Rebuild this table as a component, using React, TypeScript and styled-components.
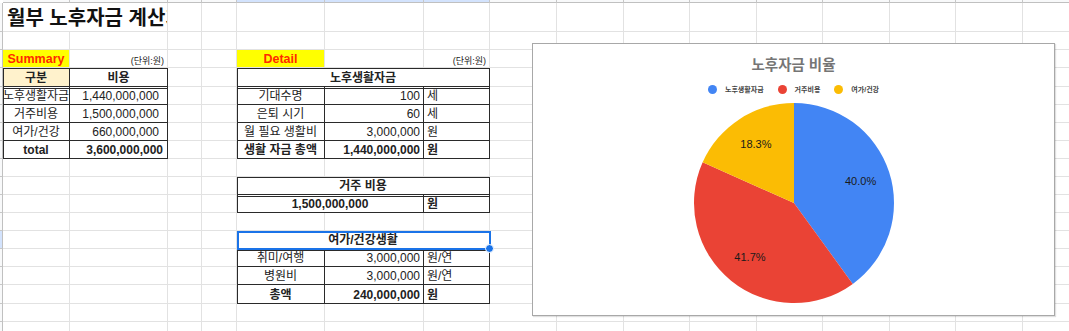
import React from "react";
import styled, { createGlobalStyle } from "styled-components";

const GRID = "#e2e2e2";
const DARK = "#2a2a2a";
const YELLOW = "#ffff00";
const RED = "#ff2a00";
const SELECT = "#1a73e8";

// px widths: row header, then A..P
const COLS = [3, 67, 98, 34, 35, 88, 99, 66, 67, 67, 66, 67, 66, 67, 66, 67, 67];
// px heights: column header, then rows 1..18
const ROWS = [3, 29, 18, 18, 19, 18, 18, 18, 18, 18, 18, 18, 18, 18, 18, 18, 19, 18, 18];

const GlobalStyle = createGlobalStyle`
  html, body {
    margin: 0;
    padding: 0;
    background: #fff;
    overflow: hidden;
  }
  body {
    font-family: "Liberation Sans", "Noto Sans CJK KR", sans-serif;
  }
`;

type Align = "left" | "center" | "right";

type CellSpec = {
  r: number;
  c: number;
  span?: number;
  text: string;
  align?: Align;
  bold?: boolean;
  bg?: string;
  color?: string;
  size?: number;
  t?: boolean;
  gap?: boolean;
  l?: boolean;
  rb?: boolean;
  bb?: boolean;
  pl?: number;
  pr?: number;
  bottom?: boolean;
};

const box = { rb: true, bb: true };

const cells: CellSpec[] = [
  { r: 1, c: 1, span: 2, text: "월부 노후자금 계산기", align: "left", bold: true, size: 20, pl: 4, pr: 0, color: "#111" },

  // summary
  { r: 3, c: 1, text: "Summary", bg: YELLOW, color: RED, bold: true, size: 12.5 },
  { r: 3, c: 2, text: "(단위:원)", align: "right", size: 9, bottom: true },
  { r: 4, c: 1, text: "구분", bg: "#fff2cc", bold: true, t: true, l: true, ...box },
  { r: 4, c: 2, text: "비용", bold: true, t: true, ...box },
  { r: 5, c: 1, text: "노후생활자금", l: true, gap: true, ...box },
  { r: 5, c: 2, text: "1,440,000,000", align: "right", pr: 8, gap: true, ...box },
  { r: 6, c: 1, text: "거주비용", l: true, ...box },
  { r: 6, c: 2, text: "1,500,000,000", align: "right", pr: 8, ...box },
  { r: 7, c: 1, text: "여가/건강", l: true, ...box },
  { r: 7, c: 2, text: "660,000,000", align: "right", pr: 8, ...box },
  { r: 8, c: 1, text: "total", bold: true, l: true, ...box },
  { r: 8, c: 2, text: "3,600,000,000", align: "right", bold: true, pr: 4, ...box },

  // detail
  { r: 3, c: 5, text: "Detail", bg: YELLOW, color: RED, bold: true, size: 12.5 },
  { r: 3, c: 7, text: "(단위:원)", align: "right", size: 9, bottom: true },
  { r: 4, c: 5, span: 3, text: "노후생활자금", bold: true, t: true, l: true, ...box },
  { r: 5, c: 5, text: "기대수명", l: true, gap: true, ...box },
  { r: 5, c: 6, text: "100", align: "right", gap: true, ...box },
  { r: 5, c: 7, text: "세", align: "left", gap: true, ...box },
  { r: 6, c: 5, text: "은퇴 시기", l: true, ...box },
  { r: 6, c: 6, text: "60", align: "right", ...box },
  { r: 6, c: 7, text: "세", align: "left", ...box },
  { r: 7, c: 5, text: "월 필요 생활비", l: true, ...box },
  { r: 7, c: 6, text: "3,000,000", align: "right", ...box },
  { r: 7, c: 7, text: "원", align: "left", ...box },
  { r: 8, c: 5, text: "생활 자금 총액", bold: true, l: true, ...box },
  { r: 8, c: 6, text: "1,440,000,000", align: "right", bold: true, ...box },
  { r: 8, c: 7, text: "원", align: "left", bold: true, ...box },

  { r: 10, c: 5, span: 3, text: "거주 비용", bold: true, t: true, l: true, ...box },
  { r: 11, c: 5, span: 2, text: "1,500,000,000", bold: true, l: true, gap: true, ...box },
  { r: 11, c: 7, text: "원", align: "left", bold: true, gap: true, ...box },

  { r: 13, c: 5, span: 3, text: "여가/건강생활", bold: true, t: true, l: true, ...box },
  { r: 14, c: 5, text: "취미/여행", l: true, gap: true, ...box },
  { r: 14, c: 6, text: "3,000,000", align: "right", gap: true, ...box },
  { r: 14, c: 7, text: "원/연", align: "left", gap: true, ...box },
  { r: 15, c: 5, text: "병원비", l: true, ...box },
  { r: 15, c: 6, text: "3,000,000", align: "right", ...box },
  { r: 15, c: 7, text: "원/연", align: "left", ...box },
  { r: 16, c: 5, text: "총액", bold: true, l: true, ...box },
  { r: 16, c: 6, text: "240,000,000", align: "right", bold: true, ...box },
  { r: 16, c: 7, text: "원", align: "left", bold: true, ...box },
];

const slices = [
  { label: "노후생활자금", value: 1440000000, color: "#4285f4" },
  { label: "거주비용", value: 1500000000, color: "#ea4335" },
  { label: "여가/건강", value: 660000000, color: "#fbbc04" },
];

export default function App() {
  const rowNums = Array.from({ length: ROWS.length - 1 }, (_, i) => i + 1);
  const colNums = Array.from({ length: COLS.length - 1 }, (_, i) => i + 1);

  return (
    <Page>
      <GlobalStyle />
      <Sheet>
        {colNums.map((c) => (
          <ColHead key={`h${c}`} $col={c + 1} $active={c >= 5 && c <= 7} />
        ))}
        {rowNums.map((r) => (
          <RowHead key={`v${r}`} $row={r + 1} $active={r === 13} />
        ))}
        {rowNums.map((r) =>
          colNums.map((c) => <GridCell key={`g${r}-${c}`} $row={r + 1} $col={c + 1} />)
        )}
        {cells.map((s, i) => (
          <DataCell
            key={i}
            $row={s.r + 1}
            $col={s.c + 1}
            $span={s.span ?? 1}
            $align={s.align ?? "center"}
            $bold={!!s.bold}
            $bg={s.bg}
            $color={s.color}
            $size={s.size ?? 12}
            $t={!!s.t}
            $gap={!!s.gap}
            $l={!!s.l}
            $r={!!s.rb}
            $b={!!s.bb}
            $pl={s.pl ?? 3}
            $pr={s.pr ?? 3}
            $bottom={!!s.bottom}
          >
            {s.text}
          </DataCell>
        ))}
        <Selection $row={14} $col={6} $span={3}>
          <Handle />
        </Selection>
      </Sheet>

      <ChartBox>
        <ChartTitle>노후자금 비율</ChartTitle>
        <Legend>
          {slices.map((s) => (
            <LegendItem key={s.label}>
              <Dot $color={s.color} />
              {s.label}
            </LegendItem>
          ))}
        </Legend>
        <PieChart />
      </ChartBox>
    </Page>
  );
}

function PieChart() {
  const size = 204;
  const cx = size / 2;
  const cy = size / 2;
  const rad = 100;
  const total = slices.reduce((a, s) => a + s.value, 0);
  const pt = (frac: number, k = 1) => {
    const a = frac * Math.PI * 2;
    return [cx + rad * k * Math.sin(a), cy - rad * k * Math.cos(a)];
  };

  let acc = 0;
  const parts = slices.map((s) => {
    const start = acc / total;
    acc += s.value;
    const end = acc / total;
    const [x1, y1] = pt(start);
    const [x2, y2] = pt(end);
    const large = end - start > 0.5 ? 1 : 0;
    const [lx, ly] = pt((start + end) / 2, 0.7);
    return {
      ...s,
      d: `M${cx} ${cy} L${x1} ${y1} A${rad} ${rad} 0 ${large} 1 ${x2} ${y2} Z`,
      lx,
      ly,
      pct: (((end - start) * 100).toFixed(1)) + "%",
    };
  });

  return (
    <PieSvg width={size} height={size} viewBox={`0 0 ${size} ${size}`}>
      {parts.map((p) => (
        <path key={p.label} d={p.d} fill={p.color} />
      ))}
      {parts.map((p) => (
        <text
          key={p.label + "t"}
          x={p.lx}
          y={p.ly}
          textAnchor="middle"
          dominantBaseline="central"
        >
          {p.pct}
        </text>
      ))}
    </PieSvg>
  );
}

const Page = styled.div`
  position: relative;
  width: 1069px;
  height: 331px;
  overflow: hidden;
`;

const Sheet = styled.div`
  display: grid;
  grid-template-columns: ${COLS.map((w) => w + "px").join(" ")};
  grid-template-rows: ${ROWS.map((h) => h + "px").join(" ")};
`;

const ColHead = styled.div<{ $col: number; $active: boolean }>`
  grid-row: 1;
  grid-column: ${(p) => p.$col};
  box-sizing: border-box;
  background: ${(p) => (p.$active ? "#d3e3fd" : "#f8f9fa")};
  border-right: 1px solid #c7c7c7;
  border-bottom: 1px solid #c0c0c0;
`;

const RowHead = styled.div<{ $row: number; $active: boolean }>`
  grid-row: ${(p) => p.$row};
  grid-column: 1;
  box-sizing: border-box;
  background: ${(p) => (p.$active ? "#d3e3fd" : "#f8f9fa")};
  border-right: 1px solid #c0c0c0;
  border-bottom: 1px solid #c7c7c7;
`;

const GridCell = styled.div<{ $row: number; $col: number }>`
  grid-row: ${(p) => p.$row};
  grid-column: ${(p) => p.$col};
  box-sizing: border-box;
  border-right: 1px solid ${GRID};
  border-bottom: 1px solid ${GRID};
`;

const DataCell = styled.div<{
  $row: number;
  $col: number;
  $span: number;
  $align: Align;
  $bold: boolean;
  $bg?: string;
  $color?: string;
  $size: number;
  $t: boolean;
  $gap: boolean;
  $l: boolean;
  $r: boolean;
  $b: boolean;
  $pl: number;
  $pr: number;
  $bottom: boolean;
}>`
  grid-row: ${(p) => p.$row};
  grid-column: ${(p) => p.$col} / span ${(p) => p.$span};
  box-sizing: border-box;
  display: flex;
  align-items: ${(p) => (p.$bottom ? "flex-end" : "center")};
  justify-content: ${(p) =>
    p.$align === "left" ? "flex-start" : p.$align === "right" ? "flex-end" : "center"};
  padding: 1px ${(p) => p.$pr}px ${(p) => (p.$bottom ? 1 : 0)}px ${(p) => p.$pl}px;
  overflow: hidden;
  white-space: nowrap;
  line-height: 1;
  background: ${(p) => p.$bg ?? "#fff"};
  color: ${(p) => p.$color ?? "#222"};
  font-size: ${(p) => p.$size}px;
  font-weight: ${(p) => (p.$bold ? 700 : 400)};
  border-right: 1px solid ${(p) => (p.$r ? DARK : GRID)};
  border-bottom: 1px solid ${(p) => (p.$b ? DARK : GRID)};
  box-shadow: ${(p) => {
    const s: string[] = [];
    if (p.$l) s.push(`inset 1px 0 0 ${DARK}`);
    if (p.$gap) s.push("inset 0 1px 0 #fff", `inset 0 2px 0 ${DARK}`);
    else if (p.$t) s.push(`inset 0 1px 0 ${DARK}`);
    return s.length ? s.join(", ") : "none";
  }};
`;

const Selection = styled.div<{ $row: number; $col: number; $span: number }>`
  grid-row: ${(p) => p.$row};
  grid-column: ${(p) => p.$col} / span ${(p) => p.$span};
  position: relative;
  box-sizing: border-box;
  margin: 0 -1px -1px 0;
  border: 2px solid ${SELECT};
  pointer-events: none;
`;

const Handle = styled.span`
  position: absolute;
  right: -5px;
  bottom: -5px;
  width: 7px;
  height: 7px;
  border-radius: 50%;
  background: ${SELECT};
  border: 1px solid #fff;
`;

const ChartBox = styled.div`
  position: absolute;
  left: 532px;
  top: 43px;
  width: 523px;
  height: 273px;
  box-sizing: border-box;
  background: #fff;
  border: 1px solid #a8a8a8;
  box-shadow: 1px 1px 1px rgba(0, 0, 0, 0.12);
  display: flex;
  flex-direction: column;
  align-items: center;
  padding-top: 12px;
`;

const ChartTitle = styled.div`
  font-family: "Liberation Sans", "Noto Sans CJK KR", sans-serif;
  font-size: 14.5px;
  line-height: 18px;
  font-weight: 700;
  color: #757575;
`;

const Legend = styled.div`
  display: flex;
  align-items: center;
  gap: 14px;
  height: 18px;
  margin-top: 6px;
`;

const LegendItem = styled.div`
  display: flex;
  align-items: center;
  gap: 8px;
  font-size: 7px;
  font-weight: 700;
  color: #444;
`;

const Dot = styled.span<{ $color: string }>`
  width: 9px;
  height: 9px;
  border-radius: 50%;
  background: ${(p) => p.$color};
`;

const PieSvg = styled.svg`
  margin-top: 3px;
  display: block;

  text {
    font-family: "Liberation Sans", sans-serif;
    font-size: 11px;
    fill: #1a1a1a;
  }
`;
